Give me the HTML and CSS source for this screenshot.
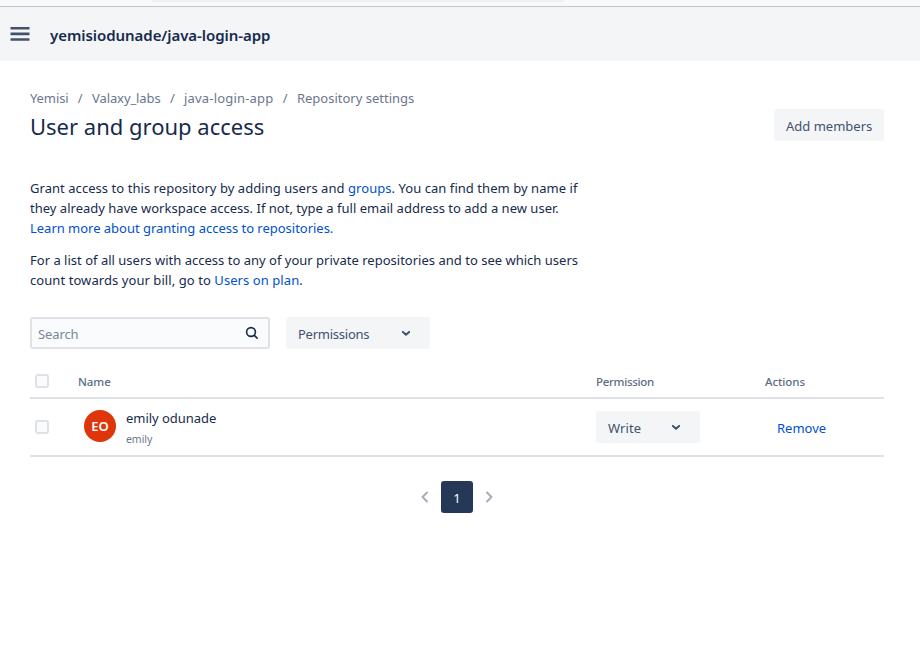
FILE: index.html
```html
<!DOCTYPE html>
<html lang="en">
<head>
<meta charset="utf-8">
<title>User and group access</title>
<link rel="stylesheet" href="styles.css">
</head>
<body>
<div class="chrome"><div class="address"></div></div>
<header class="topbar">
  <svg class="menu" width="20" height="14" viewBox="0 0 20 14"><path d="M.5 0h19v2.6H.5zM.5 5.6h19v2.6H.5zM.5 11.2h19v2.6H.5z" fill="#42526e"/></svg>
  <span class="repo">yemisiodunade/java-login-app</span>
</header>
<main>
  <nav class="crumbs">
    <span class="c1">Yemisi</span><i>/</i><span class="c2">Valaxy_labs</span><i>/</i><span class="c3">java-login-app</span><i>/</i><span class="c4">Repository settings</span>
  </nav>
  <div class="heading">
    <h1>User and group access</h1>
    <button class="btn add">Add members</button>
  </div>
  <p class="intro">
    <span class="line l1">Grant access to this repository by adding users and <a>groups</a>. You can find them by name if</span>
    <span class="line l2">they already have workspace access. If not, type a full email address to add a new user.</span>
    <span class="line l3"><a>Learn more about granting access to repositories.</a></span>
  </p>
  <p class="intro second">
    <span class="line l4">For a list of all users with access to any of your private repositories and to see which users</span>
    <span class="line l5">count towards your bill, go to <a>Users on plan</a>.</span>
  </p>
  <div class="filters">
    <div class="search"><span>Search</span>
      <svg width="14" height="14" viewBox="0 0 14 14" fill="none" stroke="#172b4d" stroke-width="1.6"><circle cx="6" cy="6" r="4.4"/><path d="M9.4 9.4l2.8 2.8" stroke-linecap="round"/></svg>
    </div>
    <button class="btn select perms"><span>Permissions</span>
      <svg width="10" height="7" viewBox="0 0 10 7" fill="none" stroke="#42526e" stroke-width="2" stroke-linecap="round" stroke-linejoin="round"><path d="M1.9 1.9L5 4.7l3.1-2.8"/></svg></button>
  </div>
  <div class="row head">
    <b class="check"></b><span>Name</span><span class="perm">Permission</span><span>Actions</span>
  </div>
  <div class="row member">
    <b class="check"></b>
    <div class="user"><div class="avatar">EO</div><div class="who"><span class="full">emily odunade</span><span class="nick">emily</span></div></div>
    <button class="btn select write"><span>Write</span>
      <svg width="10" height="7" viewBox="0 0 10 7" fill="none" stroke="#42526e" stroke-width="2" stroke-linecap="round" stroke-linejoin="round"><path d="M1.9 1.9L5 4.7l3.1-2.8"/></svg></button>
    <a class="remove">Remove</a>
  </div>
  <div class="pager">
    <svg width="10" height="12" viewBox="0 0 10 12" fill="none" stroke="#a5adba" stroke-width="2" stroke-linecap="round" stroke-linejoin="round"><path d="M7 1.5L2.5 6 7 10.5"/></svg>
    <span class="page">1</span>
    <svg width="10" height="12" viewBox="0 0 10 12" fill="none" stroke="#a5adba" stroke-width="2" stroke-linecap="round" stroke-linejoin="round"><path d="M3 1.5L7.5 6 3 10.5"/></svg>
  </div>
</main>
</body>
</html>
```
FILE: styles.css
```css
* { box-sizing: border-box; }
body { margin: 0; background: #fff; color: #172b4d; font: 13px/20px "Noto Sans", "Open Sans", sans-serif; overflow: hidden; white-space: nowrap; }
.chrome { height: 7px; background: #f9f9fb; border-bottom: 1px solid #c5c8ca; }
.address { width: 412px; height: 2px; margin-left: 152px; background: #f0f0f2; border-radius: 0 0 4px 4px; }
.topbar { height: 54px; background: #f4f5f7; display: flex; align-items: center; padding: 2px 10px 0; gap: 20px; }
.menu { margin-top: -3px; }
.repo { font: 600 15px/24px "Noto Sans", "Open Sans", sans-serif; letter-spacing: -.05px; }
main { padding: 27px 36px 0 30px; }
.crumbs { display: flex; color: #6b778c; height: 20px; }
.crumbs i { width: 23.5px; text-align: center; font-style: normal; }
.c1, .c2 { letter-spacing: -.1px; }
.c3 { letter-spacing: .18px; }
.heading { display: flex; justify-content: space-between; height: 70px; }
h1 { margin: 4px 0 0; font: 400 22px/28px "Noto Sans", "Open Sans", sans-serif; }
.btn { border: 0; border-radius: 3px; background: #f4f5f7; color: #42526e; height: 32px; padding: 2px 12px 0; font: inherit; display: flex; align-items: center; justify-content: space-between; }
.add { width: 110px; margin-top: 1px; }
.intro { margin: 0; }
.second { margin-top: 12px; }
.line { display: block; }
.l1 { letter-spacing: .05px; }
.l2, .l4 { letter-spacing: .01px; }
.l3 { letter-spacing: -.02px; }
.l5 { letter-spacing: .07px; }
a { color: #0052cc; }
.filters { display: flex; gap: 16px; margin-top: 27px; height: 32px; }
.search { width: 240px; border: 2px solid #dfe1e6; border-radius: 3px; background: #fafbfc; color: #7a869a; display: flex; align-items: center; justify-content: space-between; padding: 2px 9px 0 6px; letter-spacing: -.1px; }
.search svg { margin-top: -3px; }
.perms { width: 144px; padding-right: 19px; letter-spacing: -.25px; }
.select svg { margin-top: -1px; }
.row { display: grid; grid-template-columns: 48px 518px 169px 1fr; align-items: center; border-bottom: 2px solid #dfe1e6; }
.head { height: 50px; padding-top: 15px; font-size: 11.5px; font-weight: 500; color: #5e6c84; letter-spacing: -.08px; }
.head span { padding-top: 3px; }
.head .perm { letter-spacing: -.3px; }
.member { height: 58px; }
.check { width: 14px; height: 14px; border: 2px solid #dfe1e6; border-radius: 3px; background: #fafbfc; margin-left: 5px; }
.user { display: flex; align-items: center; padding-left: 6px; gap: 10px; }
.avatar { width: 32px; height: 32px; margin-bottom: 2px; border-radius: 50%; background: #de350b; color: #fff; font-weight: 600; display: flex; align-items: center; justify-content: center; }
.who { display: flex; flex-direction: column; gap: 1px; padding-top: 2px; }
.full { letter-spacing: -.04px; }
.nick { font-size: 10.5px; color: #6b778c; letter-spacing: -.05px; }
.write { width: 104px; padding-right: 19px; letter-spacing: .1px; }
.remove { padding: 2px 0 0 12px; }
.pager { display: flex; justify-content: center; align-items: center; gap: 11px; margin-top: 24px; }
.page { width: 32px; height: 32px; padding-top: 1px; border-radius: 3px; background: #253858; color: #fff; display: flex; align-items: center; justify-content: center; }
```
